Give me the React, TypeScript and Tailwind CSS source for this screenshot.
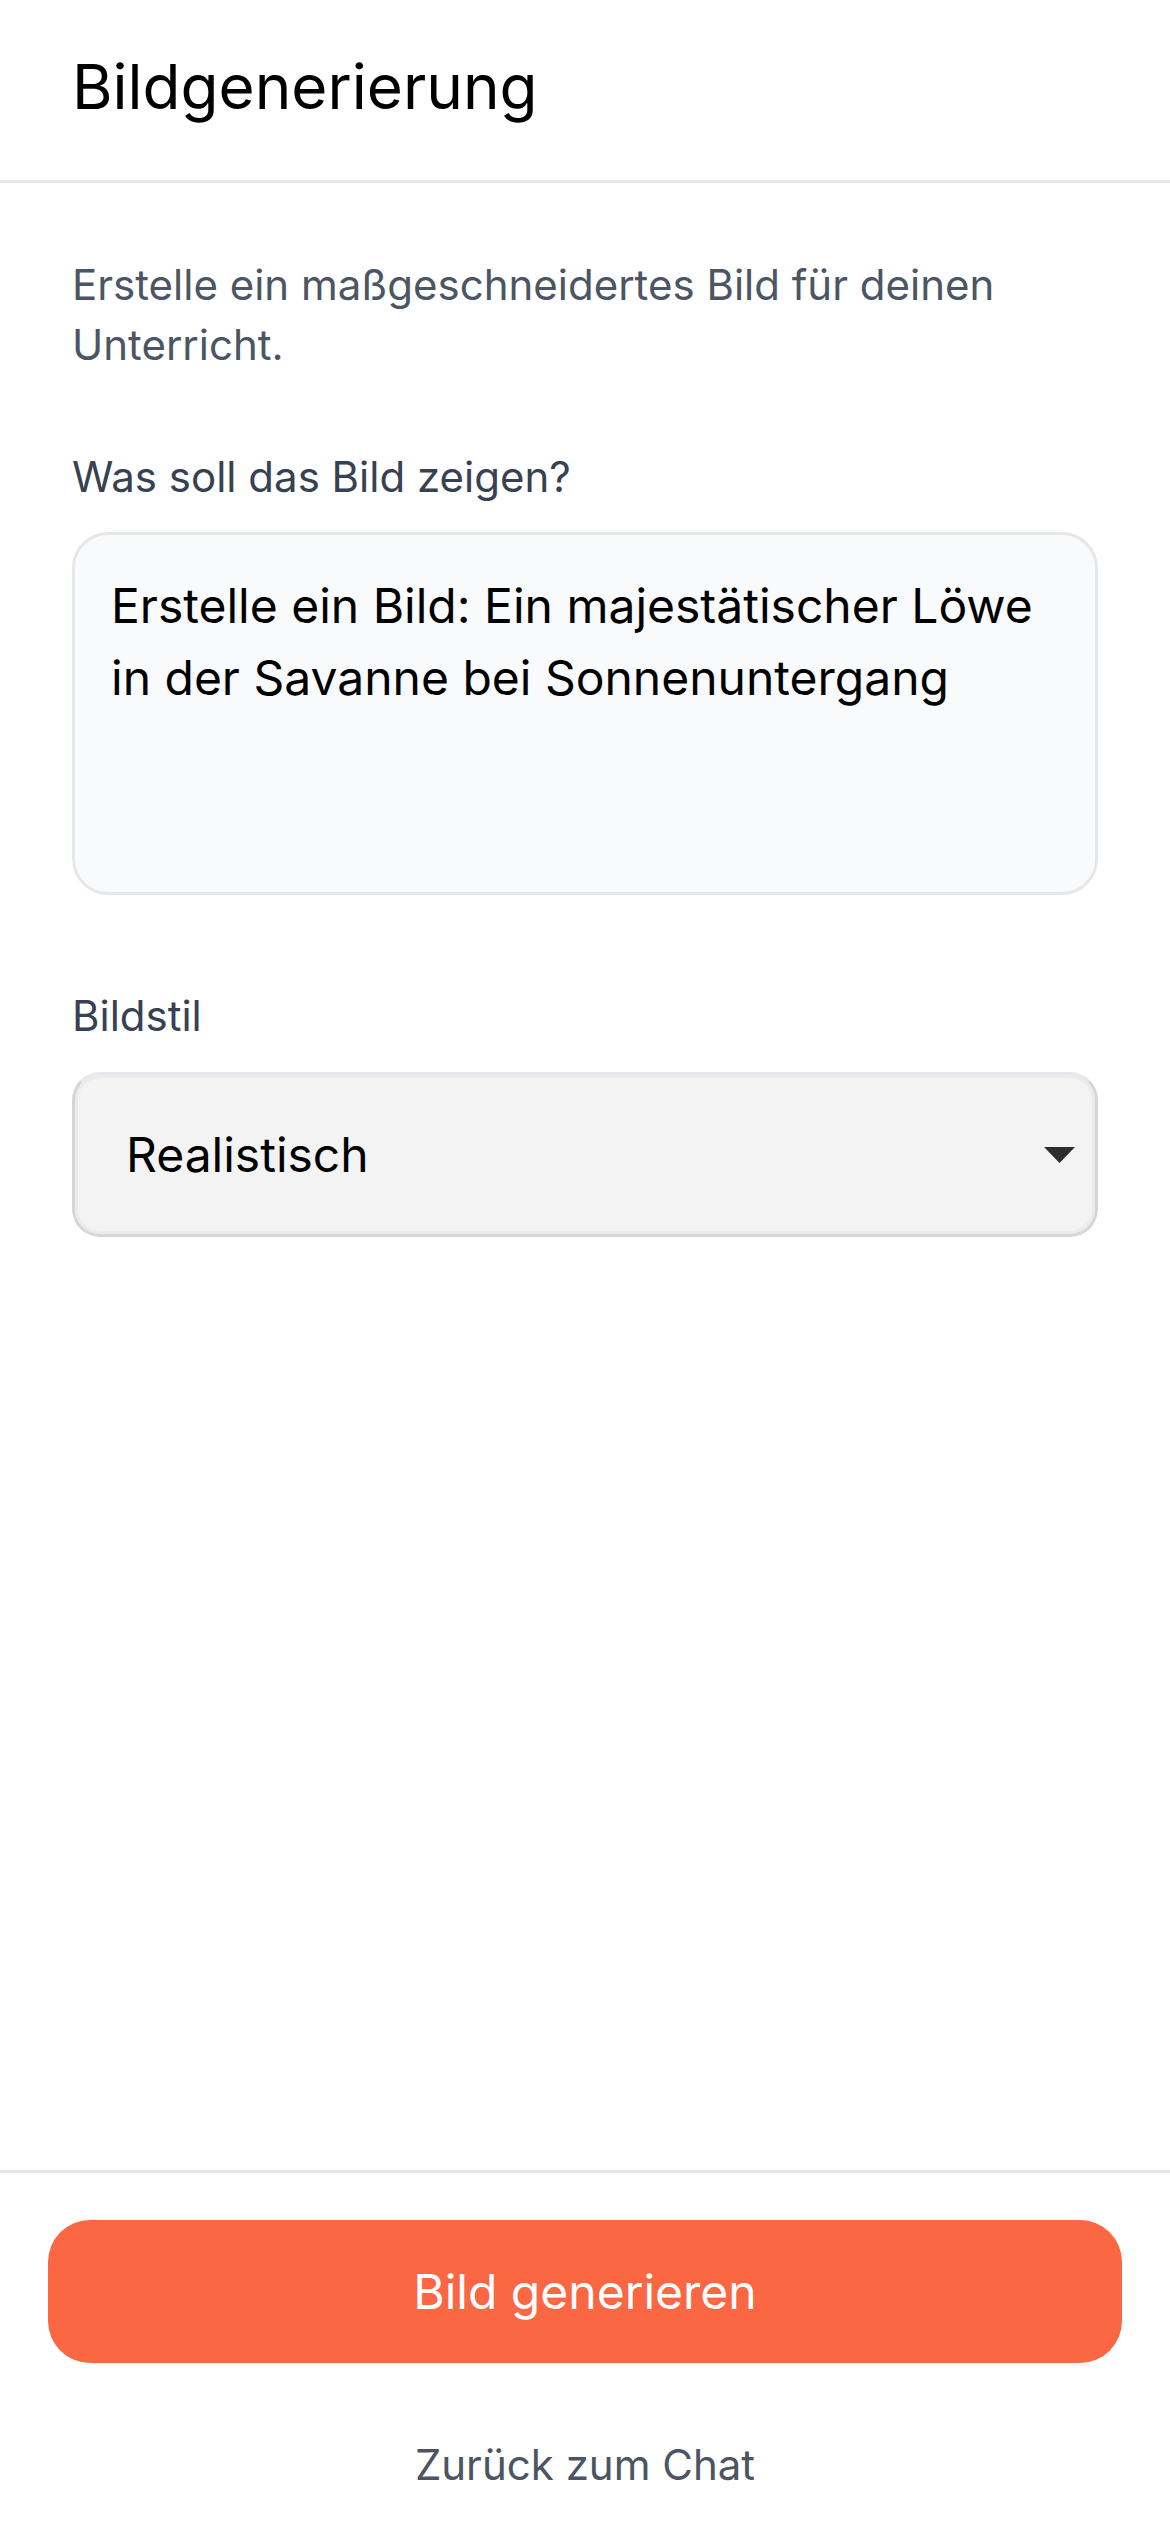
export default function App() {
  return (
    <div
      className="flex min-h-[2532px] w-[1170px] flex-col bg-white"
      style={{ fontFamily: "Inter, 'Noto Sans', sans-serif" }}
    >
      <header className="flex h-[183px] items-center border-b-[3px] border-[#e5e7eb] px-[72px] pb-[6px]">
        <h1 className="text-[62px] font-normal leading-[80px] text-black">Bildgenerierung</h1>
      </header>

      <main className="flex-1 px-[72px] pt-[72px]">
        <p className="text-[42px] leading-[60px] text-[#4b5563]">
          Erstelle ein maßgeschneidertes Bild für deinen Unterricht.
        </p>

        <label className="mt-[72px] block text-[42px] leading-[60px] text-[#374151]">
          Was soll das Bild zeigen?
        </label>
        <textarea
          readOnly
          className="mt-[25px] block h-[363px] w-full resize-none rounded-[36px] border-[3px] border-[#e5e7eb] bg-[#f9fafb] px-[36px] py-[35px] text-[48px] leading-[72px] text-black outline-none"
          defaultValue="Erstelle ein Bild: Ein majestätischer Löwe in der Savanne bei Sonnenuntergang"
        />

        <label className="mt-[91px] block text-[42px] leading-[60px] text-[#374151]">Bildstil</label>
        <div className="mt-[26px] flex h-[165px] items-center justify-between rounded-[28px] border-[3px] border-[#d6d6d6] border-t-[#e5e7eb] bg-[#f3f3f3] pl-[51px] pr-[20px] shadow-[inset_0_0_0_3px_#ebebeb]">
          <span className="text-[48px] leading-[72px] text-black">Realistisch</span>
          <svg width="31" height="16" viewBox="0 0 31 16">
            <path d="M0 0 L31 0 L15.5 16 Z" fill="#2b2d2f" />
          </svg>
        </div>
      </main>

      <footer className="border-t-[3px] border-[#e5e7eb] px-[48px] pb-[37px] pt-[47px]">
        <button className="flex h-[143px] w-full items-center justify-center rounded-[42px] bg-[#fb6643] text-[48px] leading-[72px] text-white">
          Bild generieren
        </button>
        <div className="mt-[72px] text-center text-[42px] leading-[60px] text-[#4b5563]">
          Zurück zum Chat
        </div>
      </footer>
    </div>
  );
}
